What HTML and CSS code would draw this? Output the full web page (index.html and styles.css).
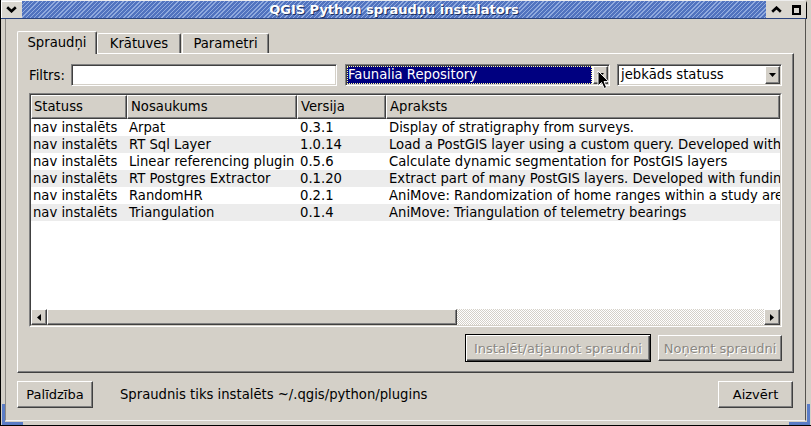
FILE: index.html
```html
<!DOCTYPE html>
<html lang="lv">
<head>
    <meta charset="UTF-8">
    <title>QGIS Python spraudņu instalators</title>
    <link rel="stylesheet" href="styles.css">
</head>
<body>
    <div class="window">
        <div class="titlebar">
            <div class="wm-btn menu-btn">
                <svg width="11" height="7" viewBox="0 0 11 7"><path d="M1.2 1.2 L5.5 5.3 L9.8 1.2" fill="none" stroke="#000" stroke-width="2.6"/></svg>
            </div>
            <div class="title">QGIS Python spraudņu instalators</div>
            <div class="wm-btn">
                <svg width="11" height="7" viewBox="0 0 11 7"><path d="M1.2 5.8 L5.5 1.7 L9.8 5.8" fill="none" stroke="#000" stroke-width="2.6"/></svg>
            </div>
            <div class="wm-btn">
                <svg width="9" height="10" viewBox="0 0 9 10"><rect x="1" y="1.5" width="7" height="7.5" fill="none" stroke="#000" stroke-width="2"/><rect x="0" y="0" width="9" height="3" fill="#000"/></svg>
            </div>
        </div>
        <div class="frame">
            <div class="client">
                <div class="tabbar">
                    <div class="tab active">Spraudņi</div>
                    <div class="tab tab-repos">Krātuves</div>
                    <div class="tab tab-params">Parametri</div>
                </div>
                <div class="pane">
                    <div class="filter-row">
                        <label class="filter-label">Filtrs:</label>
                        <div class="edit filter-edit"></div>
                        <div class="combo repo-combo">
                            <div class="combo-value selected">Faunalia Repository</div>
                            <div class="combo-btn">
                                <svg width="7" height="4" viewBox="0 0 7 4"><path d="M0 0 H7 L3.5 4 Z" fill="#000"/></svg>
                            </div>
                            <svg class="cursor" width="13" height="20" viewBox="0 0 13 20"><path d="M1 1 L1 16 L4.5 12.5 L7.2 18.5 L9.6 17.4 L7 11.6 L11.8 11.6 Z" fill="#000" stroke="#fff" stroke-width="1" stroke-linejoin="round"/></svg>
                        </div>
                        <div class="combo status-combo">
                            <div class="combo-value">jebkāds statuss</div>
                            <div class="combo-btn">
                                <svg width="7" height="4" viewBox="0 0 7 4"><path d="M0 0 H7 L3.5 4 Z" fill="#000"/></svg>
                            </div>
                        </div>
                    </div>
                    <div class="list">
                        <div class="list-inner">
                            <div class="list-head">
                                <div class="head-cell">Statuss</div>
                                <div class="head-cell">Nosaukums</div>
                                <div class="head-cell">Versija</div>
                                <div class="head-cell">Apraksts</div>
                            </div>
                            <div class="list-body">
                                <div class="row">
                                    <span>nav instalēts</span><span>Arpat</span><span>0.3.1</span><span>Display of stratigraphy from surveys.</span>
                                </div>
                                <div class="row">
                                    <span>nav instalēts</span><span>RT Sql Layer</span><span>1.0.14</span><span>Load a PostGIS layer using a custom query. Developed with funding from Regione Toscana-SITA</span>
                                </div>
                                <div class="row">
                                    <span>nav instalēts</span><span>Linear referencing plugin</span><span>0.5.6</span><span>Calculate dynamic segmentation for PostGIS layers</span>
                                </div>
                                <div class="row">
                                    <span>nav instalēts</span><span>RT Postgres Extractor</span><span>0.1.20</span><span>Extract part of many PostGIS layers. Developed with funding from Regione Toscana-SITA</span>
                                </div>
                                <div class="row">
                                    <span>nav instalēts</span><span>RandomHR</span><span>0.2.1</span><span>AniMove: Randomization of home ranges within a study area</span>
                                </div>
                                <div class="row">
                                    <span>nav instalēts</span><span>Triangulation</span><span>0.1.4</span><span>AniMove: Triangulation of telemetry bearings</span>
                                </div>
                            </div>
                            <div class="hscroll">
                                <div class="sb-btn">
                                    <svg width="4" height="7" viewBox="0 0 4 7"><path d="M4 0 V7 L0 3.5 Z" fill="#000"/></svg>
                                </div>
                                <div class="sb-thumb"></div>
                                <div class="sb-track"></div>
                                <div class="sb-btn">
                                    <svg width="4" height="7" viewBox="0 0 4 7"><path d="M0 0 V7 L4 3.5 Z" fill="#000"/></svg>
                                </div>
                            </div>
                        </div>
                    </div>
                    <div class="actions">
                        <button class="btn btn-default btn-install" disabled>Instalēt/atjaunot spraudni</button>
                        <button class="btn btn-remove" disabled>Noņemt spraudni</button>
                    </div>
                </div>
                <div class="footer">
                    <button class="btn help-btn">Palīdzība</button>
                    <span class="status-text">Spraudnis tiks instalēts ~/.qgis/python/plugins</span>
                    <button class="btn close-btn">Aizvērt</button>
                </div>
            </div>
        </div>
        <span class="corner corner-bl"></span>
        <span class="corner corner-br"></span>
    </div>
</body>
</html>
```

FILE: styles.css
```css
* {
    box-sizing: border-box;
}
body {
    margin: 0;
    background: #ffffff;
    font-family: "DejaVu Sans", "Noto Sans", sans-serif;
    font-size: 13.2px;
    color: #000;
}
.window {
    position: relative;
    width: 811px;
    height: 426px;
    display: flex;
    flex-direction: column;
    background: #d4d0c8;
    border-left: 1px solid #000;
    border-bottom: 1px solid #000;
}
.titlebar {
    height: 19px;
    margin-right: 4px;
    display: flex;
    background: repeating-linear-gradient(135deg, #5173bf 0px, #5173bf 2px, #90aade 2px, #90aade 3px);
    border-top: 1px solid #eeeeee;
    border-bottom: 1px solid #2b447e;
    border-right: 1px solid #000;
    border-top-right-radius: 4px;
}
.wm-btn {
    width: 20px;
    display: flex;
    align-items: center;
    justify-content: center;
    background: #dad7d0;
}
.menu-btn {
    width: 21px;
    box-shadow: inset 1px 1px #ffffff;
}
.title {
    flex: 1;
    text-align: center;
    color: #fff;
    font-size: 13px;
    font-weight: bold;
    line-height: 17px;
    text-shadow: 1px 1px #1d3060;
    white-space: nowrap;
}
.frame {
    flex: 1;
    padding: 0 5px 4px 4px;
}
.client {
    height: 100%;
    display: flex;
    flex-direction: column;
    padding: 12px 11px 0 11px;
    border-left: 1px solid #8c8984;
    border-right: 1px solid #55534f;
    border-bottom: 1px solid #f4f4f4;
}
.tabbar {
    position: relative;
    z-index: 1;
    height: 22px;
    display: flex;
    align-items: flex-end;
}
.tab {
    height: 20px;
    line-height: 19px;
    text-align: center;
    background: #d4d0c8;
    border-top: 1px solid #fff;
    border-left: 1px solid #fff;
    border-right: 1px solid #404040;
    border-radius: 2px 2px 0 0;
    box-shadow: inset -1px 0 #808080;
}
.tab.active {
    width: 80px;
    height: 23px;
    line-height: 22px;
    margin-bottom: -1px;
}
.tab-repos {
    width: 84px;
}
.tab-params {
    width: 87px;
    margin-left: 1px;
}
.pane {
    height: 320px;
    display: flex;
    flex-direction: column;
    padding: 10px 11px 0 11px;
    border: 1px solid;
    border-color: #fff #404040 #404040 #fff;
    box-shadow: inset -1px -1px #808080;
}
.filter-row {
    height: 22px;
    display: flex;
    align-items: center;
}
.filter-label {
    width: 42px;
}
.edit,
.combo {
    height: 22px;
    background: #fff;
    border: 1px solid;
    border-color: #808080 #fff #fff #808080;
    box-shadow: inset 1px 1px #404040, inset -1px -1px #d4d0c8;
}
.filter-edit {
    width: 266px;
}
.combo {
    position: relative;
    display: flex;
    padding: 1px;
}
.repo-combo {
    width: 265px;
    margin-left: 8px;
}
.status-combo {
    width: 165px;
    margin-left: 7px;
}
.combo-value {
    flex: 1;
    line-height: 18px;
    padding-left: 2px;
    white-space: nowrap;
}
.combo-value.selected {
    margin-right: 1px;
    padding-left: 1px;
    background: #000080;
    color: #fff;
    outline: 1px dotted #ffffa0;
    outline-offset: -1px;
}
.combo-btn {
    width: 15px;
    display: flex;
    align-items: center;
    justify-content: center;
    background: #d4d0c8;
    border: 1px solid;
    border-color: #fff #404040 #404040 #fff;
    box-shadow: inset -1px -1px #808080;
}
.cursor {
    position: absolute;
    left: 251px;
    top: 5px;
}
.list {
    margin-top: 7px;
    height: 234px;
    border: 1px solid;
    border-color: #808080 #fff #fff #808080;
}
.list-inner {
    height: 100%;
    display: flex;
    flex-direction: column;
    overflow: hidden;
    background: #fff;
    border: 1px solid;
    border-color: #404040 #d4d0c8 #d4d0c8 #404040;
}
.list-head,
.row {
    display: grid;
    grid-template-columns: 96px 170px 89px 1fr;
}
.list-head {
    height: 24px;
}
.head-cell {
    padding-left: 2px;
    line-height: 21px;
    white-space: nowrap;
    background: #d4d0c8;
    border: 1px solid;
    border-color: #fff #404040 #404040 #fff;
    box-shadow: inset -1px -1px #808080;
}
.head-cell + .head-cell {
    padding-left: 3px;
}
.list-body {
    flex: 1;
}
.row {
    height: 17px;
    line-height: 17px;
    white-space: nowrap;
}
.row:nth-child(even) {
    background: #ececec;
}
.row span {
    overflow: hidden;
    padding-left: 2px;
}
.row span:nth-child(3) {
    padding-left: 3px;
}
.row span:nth-child(4) {
    padding-left: 3px;
}
.hscroll {
    height: 16px;
    display: flex;
}
.sb-btn,
.sb-thumb {
    background: #d4d0c8;
    border: 1px solid;
    border-color: #fff #404040 #404040 #fff;
    box-shadow: inset -1px -1px #808080;
}
.sb-btn {
    width: 16px;
    display: flex;
    align-items: center;
    justify-content: center;
}
.sb-thumb {
    width: 410px;
}
.sb-track {
    flex: 1;
    background: conic-gradient(#fff 25%, #d4d0c8 0 50%, #fff 0 75%, #d4d0c8 0) 0 0 / 2px 2px;
}
.actions {
    margin-top: 7px;
    height: 28px;
    display: flex;
    align-items: center;
    justify-content: flex-end;
    gap: 7px;
}
.btn {
    height: 26px;
    padding: 0;
    font-family: inherit;
    font-size: 13px;
    color: #000;
    background: #d4d0c8;
    border: 1px solid;
    border-color: #fff #404040 #404040 #fff;
    border-radius: 0;
    box-shadow: inset -1px -1px #808080;
}
.btn:disabled {
    color: #8a8782;
    text-shadow: 1px 1px #fff;
}
.btn-default {
    height: 28px;
    border-color: #000;
    box-shadow: inset 1px 1px #fff, inset -1px -1px #404040, inset -2px -2px #808080;
}
.btn-install {
    width: 186px;
}
.btn-remove {
    width: 124px;
}
.footer {
    margin-top: 8px;
    height: 27px;
    display: flex;
    align-items: center;
}
.help-btn {
    width: 76px;
    height: 27px;
}
.status-text {
    margin-left: 27px;
}
.close-btn {
    width: 75px;
    height: 27px;
    margin-left: auto;
    margin-right: 1px;
}
.corner {
    position: absolute;
    bottom: 0;
    width: 21px;
    height: 21px;
    border-bottom: 3px solid #5a7cc6;
}
.corner-bl {
    left: 1px;
    border-left: 3px solid #5a7cc6;
}
.corner-br {
    right: 1px;
    border-right: 3px solid #5a7cc6;
}
```
